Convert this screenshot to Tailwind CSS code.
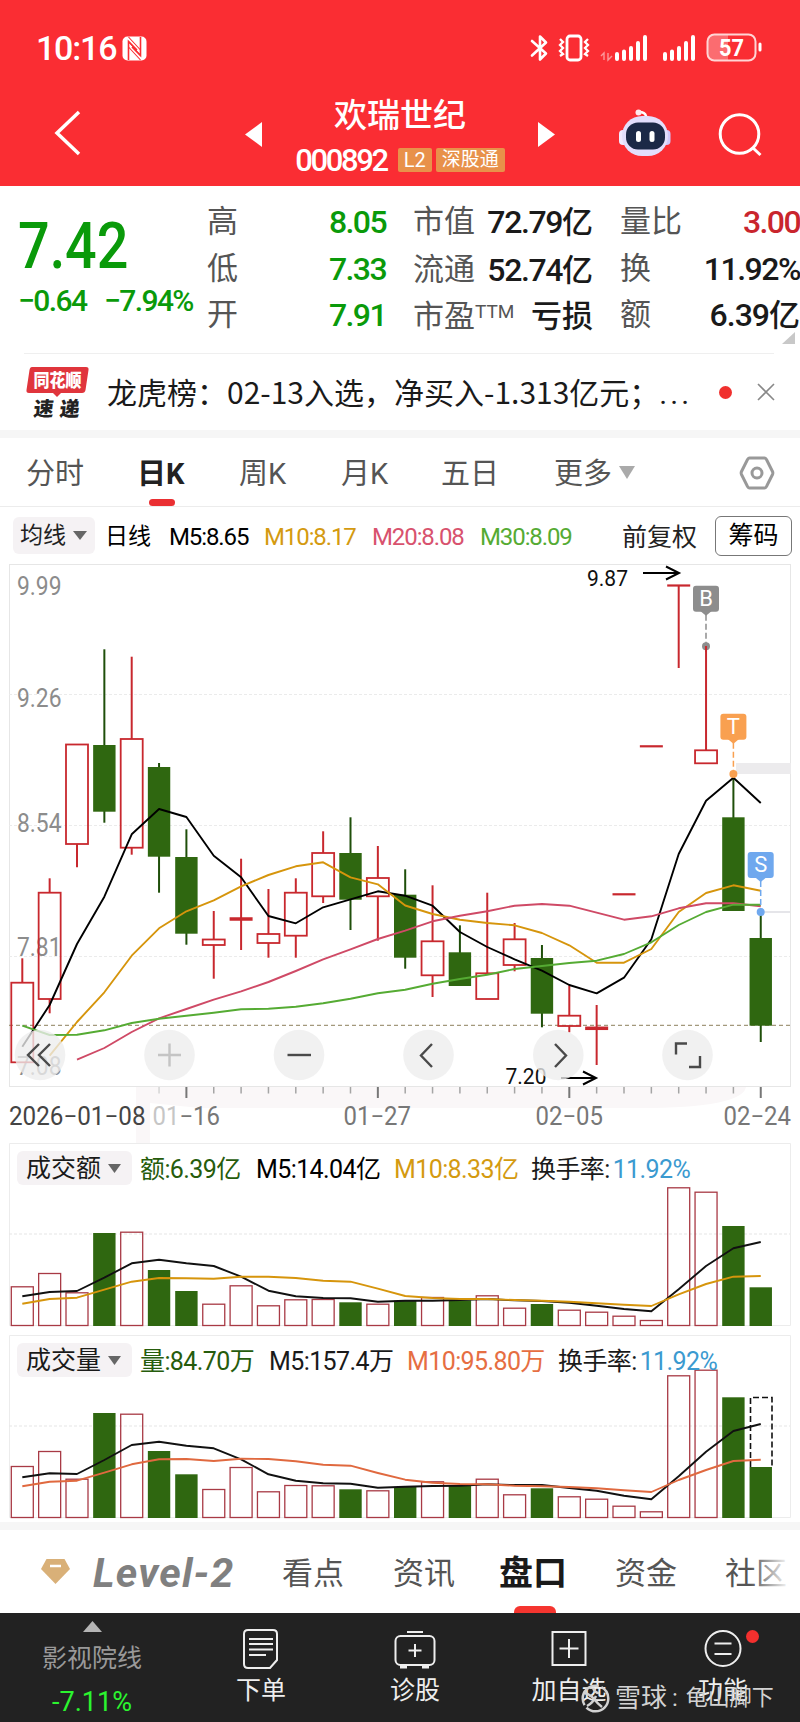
<!DOCTYPE html>
<html lang="zh-CN">

<head>
    <meta charset="UTF-8">
    <meta name="viewport" content="width=device-width, initial-scale=1.0">
    <title>欢瑞世纪 000892</title>
    <script src="https://cdn.jsdelivr.net/npm/@tailwindcss/browser@4"></script>
</head>

<body class="w-[800px] h-[1722px] overflow-hidden bg-white text-[#1a1a1a] whitespace-nowrap font-['Roboto','Noto_Sans_CJK_SC',sans-serif]">
    <!-- header start -->
    <header class="h-[186px] bg-[#fa2d33] text-white">
        <div class="h-[92px] pt-[4px] pl-[36px] pr-[38px] flex items-center">
            <span class="text-[34px] leading-10 font-medium tracking-[-1.2px]">10:16</span>
            <svg class="ml-[6px]" width="25" height="25" viewBox="0 0 25 25">
                <rect x=".5" y=".5" width="24" height="24" rx="5" fill="#fff" />
                <path d="M6.500 24V5.500L15 14M18.500 1v18.500L10 11" fill="none" stroke="#fa2d33" stroke-width="1.600" />
                <path d="M6.500 5.500l12 14M6.500 1l12 13M6.500 11l12 13" stroke="#fa2d33" stroke-width="1.100" />
            </svg>
            <!-- status icons -->
            <svg class="ml-auto" width="232" height="34" viewBox="530 31 232 34" fill="none" stroke="#fff">
                <path d="M532 41l14 12.500-6 6V36.500l6 6L532 55.500" stroke-width="2.600" stroke-linejoin="round" stroke-linecap="round" />
                <rect x="567" y="36" width="14" height="24" rx="3" stroke-width="2.800" />
                <path d="M560 39l3 3-3 3 3 3-3 3 3 3-3 2M588 39l-3 3 3 3-3 3 3 3-3 3 3 2" stroke-width="2.300" />
                <path d="M601 56l3-3v7M608 53v7l4-4" stroke-width="1.400" opacity=".5" />
                <path d="M617 54v5M624 51.500v7.500M631 48v11M638 43v16M645 37v22M665 54v5M672 51.500v7.500M679 48v11M686 43v16M693 37v22" stroke-width="4" stroke-linecap="round" />
                <path d="M728 35h-13q-7 0-7 7v11q0 7 7 7h13z" fill="#fff" fill-opacity=".3" stroke="none" />
                <rect x="707.500" y="34.500" width="48" height="26" rx="7" stroke-width="2" stroke="#ffd5d5" />
                <path d="M760 44v6" stroke-width="3" stroke-linecap="round" />
                <text x="719" y="56" font-size="24" font-weight="700" fill="#fff" stroke="none" textLength="25" lengthAdjust="spacingAndGlyphs">57</text>
            </svg>
        </div>
        <div class="h-[94px] flex">
            <svg class="ml-[54px] mt-[17px]" width="28" height="48" viewBox="54 109 28 48">
                <path d="M79 112L57 133l22 21" fill="none" stroke="#fff" stroke-width="3.500" />
            </svg>
            <svg class="ml-[163px] mt-[30px]" width="17" height="25" viewBox="0 0 17 25"><path d="M17 0v25L0 12.500z" fill="#fff" /></svg>
            <div class="w-[276px] flex flex-col items-center">
                <h1 class="text-[33px] leading-[40px] mt-[4px] font-medium">欢瑞世纪</h1>
                <div class="mt-[9px] flex items-center leading-[32px]">
                    <span class="text-[31px] font-medium tracking-[-2.4px]">000892</span>
                    <span class="ml-[11px] mt-[-2px] h-[24px] w-[34px] rounded-xs bg-[#e8914a] text-center text-[20px] leading-[25px]">L2</span>
                    <span class="ml-[4px] mt-[-2px] h-[24px] w-[69px] rounded-xs bg-[#e8914a] text-center text-[19px] leading-[24px]">深股通</span>
                </div>
            </div>
            <svg class="mt-[30px]" width="17" height="25" viewBox="0 0 17 25"><path d="M0 0v25l17-12.500z" fill="#fff" /></svg>
            <!-- assistant -->
            <svg class="ml-[63px] mt-[15px]" width="54" height="52" viewBox="618 107 54 52">
                <path d="M646 119v-3q-1-4-7-4" fill="none" stroke="#fff" stroke-width="2.500" />
                <circle cx="638.500" cy="112.500" r="3" fill="#ffe9ee" />
                <rect x="619" y="130" width="9" height="15" rx="4" fill="#f1eaff" />
                <rect x="662" y="130" width="8.500" height="15" rx="4" fill="#cfc8fb" />
                <rect x="622" y="116" width="46" height="40" rx="20" fill="#e3defc" />
                <rect x="626" y="122.500" width="39" height="27" rx="12" fill="#1c2947" />
                <rect x="636" y="131" width="5" height="11" rx="2.500" fill="#fff" />
                <rect x="649.500" y="131" width="5" height="11" rx="2.500" fill="#fff" />
            </svg>
            <svg class="ml-[46px] mt-[20px]" width="46" height="46" viewBox="718 112 46 46" fill="none" stroke="#fff" stroke-width="3">
                <circle cx="739.500" cy="134" r="19.300" />
                <path d="M752.500 147.500l8 7.500" />
            </svg>
        </div>
    </header>
    <!-- header end -->

    <!-- quote start -->
    <section class="relative h-[168px] flex pt-[13px]">
        <div class="w-[207px] pl-[18px] text-[#0a9a0a] font-medium">
            <div class="mt-[13px] h-[70px] text-[64px] leading-[70px] origin-left scale-x-[0.87]">7.42</div>
            <div class="mt-[1px] flex text-[30px] leading-[36px] tracking-[-1.6px]">
                <span class="w-[86px]">−0.64</span>
                <span>−7.94%</span>
            </div>
        </div>
        <div class="w-[179px] text-[31px] leading-[46.700px]">
            <div class="flex justify-between"><span class="text-[#555]">高</span><span class="font-medium tracking-[-1.600px] text-[#0a9a0a] text-[32px]">8.05</span></div>
            <div class="flex justify-between"><span class="text-[#555]">低</span><span class="font-medium tracking-[-1.600px] text-[#0a9a0a] text-[32px]">7.33</span></div>
            <div class="flex justify-between"><span class="text-[#555]">开</span><span class="font-medium tracking-[-1.600px] text-[#0a9a0a] text-[32px]">7.91</span></div>
        </div>
        <div class="ml-[27px] w-[180px] text-[31px] leading-[46.700px]">
            <div class="flex justify-between"><span class="text-[#555]">市值</span><span class="font-medium"><span class="tracking-[-1.400px] text-[32px]">72.79</span>亿</span></div>
            <div class="flex justify-between"><span class="text-[#555]">流通</span><span class="font-medium"><span class="tracking-[-1.400px] text-[32px]">52.74</span>亿</span></div>
            <div class="flex justify-between"><span class="flex text-[#555]">市盈<span class="text-[19px] leading-[36px]">TTM</span></span><span class="font-medium">亏损</span></div>
        </div>
        <div class="ml-[27px] w-[180px] text-[31px] leading-[46.700px]">
            <div class="flex justify-between"><span class="text-[#555]">量比</span><span class="font-medium tracking-[-1.600px] text-[32px] text-[#c9252d]">3.00</span></div>
            <div class="flex justify-between"><span class="text-[#555]">换</span><span class="font-medium tracking-[-1.500px] text-[32px]">11.92%</span></div>
            <div class="flex justify-between"><span class="text-[#555]">额</span><span class="font-medium"><span class="tracking-[-1px] text-[32px]">6.39</span>亿</span></div>
        </div>
        <svg class="absolute right-[5px] bottom-[10px]" width="13" height="12" viewBox="0 0 13 12"><path d="M13 0v12H0z" fill="#c8c8c8" /></svg>
        <div class="absolute bottom-0 left-[24px] right-[26px] h-px bg-[#efefef]"></div>
    </section>
    <!-- quote end -->

    <!-- news start -->
    <section class="h-[76px] flex items-center font-['Noto_Sans_CJK_SC',sans-serif]">
        <svg class="ml-[26px]" width="64" height="54" viewBox="26 364 64 54" font-weight="900">
            <path d="M32 366h54q3 0 2.500 3l-3 20q-.5 3-3.500 3H61l-4 4-4-4H29q-3 0-2.500-3l3-20q.5-3 2.500-3z" fill="#e0353c" />
            <text x="33.500" y="386" font-size="18" fill="#fff" textLength="48" lengthAdjust="spacingAndGlyphs">同花顺</text>
            <text transform="translate(33 415) skewX(-6)" font-size="20" fill="#222" textLength="46">速递</text>
        </svg>
        <span class="ml-[17px] w-[600px] text-[30px] leading-[40px]">龙虎榜：02-13入选，净买入-1.313亿元；<span class="font-['Roboto'] tracking-[3px]">...</span></span>
        <span class="ml-[12px] size-[13px] rounded-full bg-[#f0302e]"></span>
        <svg class="ml-[25px]" width="18" height="18" viewBox="0 0 18 18"><path d="M1 1l16 16M17 1L1 17" stroke="#888" stroke-width="1.600" /></svg>
    </section>
    <!-- news end -->
    <div class="h-[8px] bg-[#f6f6f6]"></div>

    <!-- period tabs -->
    <nav class="h-[69px] pl-[26px] flex border-b border-[#ececec] text-[29px] leading-[72px] text-[#555]">
        <span class="w-[111px]">分时</span>
        <span class="relative w-[102px] h-[68px] font-bold text-[#222]">日K
            <i class="absolute left-[12px] bottom-0 w-[26px] h-[7px] rounded-full bg-[#ea2f32]"></i>
        </span>
        <span class="w-[102px]">周K</span>
        <span class="w-[100px]">月K</span>
        <span class="w-[113px]">五日</span>
        <span>更多</span>
        <svg class="ml-[7px] mt-[28px]" width="16" height="13" viewBox="0 0 16 13"><path d="M0 0h16L8 13z" fill="#aaa" /></svg>
        <svg class="ml-auto mr-[25px] mt-[18px]" width="36" height="34" viewBox="0 0 36 34" fill="none" stroke="#999" stroke-width="3">
            <path d="M10.500 2h15q1 0 2 1.500l6 12q.7 1.500 0 3l-6 12q-1 1.500-2 1.500h-15q-1 0-2-1.500l-6-12q-.7-1.500 0-3l6-12q1-1.500 2-1.500z" />
            <circle cx="18" cy="17" r="5" />
        </svg>
    </nav>

    <!-- averages -->
    <div class="h-[57px] pl-[13px] pr-[8px] flex items-center text-[23px] leading-[36px] text-black">
        <div class="w-[82px] h-[37px] mr-[10px] rounded-md bg-[#f5f2f4] flex items-center pl-[7px] text-[#222]">均线
            <svg class="ml-[7px]" width="14" height="9" viewBox="0 0 14 9"><path d="M0 0h14L7 9z" fill="#666" /></svg>
        </div>
        <span class="w-[64px] mt-[2px]">日线</span>
        <span class="w-[95px] mt-[3px] text-[24px] tracking-[-1.100px]">M5:8.65</span>
        <span class="w-[108px] mt-[3px] text-[24px] tracking-[-1.100px] text-[#d49a10]">M10:8.17</span>
        <span class="w-[108px] mt-[3px] text-[24px] tracking-[-1.100px] text-[#d8526e]">M20:8.08</span>
        <span class="w-[108px] mt-[3px] text-[24px] tracking-[-1.100px] text-[#55ab33]">M30:8.09</span>
        <span class="ml-auto mt-[4px] text-[25px] text-[#222]">前复权</span>
        <span class="ml-[18px] w-[77px] h-[40px] rounded-md border border-[#777] text-center text-[25px] leading-[38px]">筹码</span>
    </div>

    <!-- k line chart -->
    <svg id="kline" class="block" width="800" height="579" viewBox="0 564 800 579"></svg>

    <!-- turnover -->
    <section class="relative h-[192px]">
        <svg id="amount" class="absolute inset-0" width="800" height="192" viewBox="0 0 800 192"></svg>
        <div class="relative h-[50px] pl-[17px] flex items-center text-[25px] leading-[34px] tracking-[-.6px]">
            <div class="w-[115px] h-[34px] mr-[8px] rounded-md bg-[#f5f2f4] flex items-center pl-[9px] tracking-normal"><span class="mt-[2px]">成交额</span>
                <svg class="ml-[7px]" width="13" height="9" viewBox="0 0 13 9"><path d="M0 0h13L6.500 9z" fill="#666" /></svg>
            </div>
            <span class="w-[116px] mt-[3px] text-[#265c0c]">额:6.39亿</span>
            <span class="w-[138px] mt-[3px] text-black">M5:14.04亿</span>
            <span class="w-[137px] mt-[3px] text-[#d49a10]">M10:8.33亿</span>
            <span class="mt-[3px]">换手率:</span><span class="ml-[3px] mt-[3px] text-[#3b9ad0]">11.92%</span>
        </div>
    </section>

    <!-- volume -->
    <section class="relative h-[187px]">
        <svg id="volume" class="absolute inset-0" width="800" height="187" viewBox="0 0 800 187"></svg>
        <div class="relative h-[50px] pl-[17px] flex items-center text-[25px] leading-[34px] tracking-[-.6px]">
            <div class="w-[115px] h-[34px] mr-[8px] rounded-md bg-[#f5f2f4] flex items-center pl-[9px] tracking-normal"><span class="mt-[2px]">成交量</span>
                <svg class="ml-[7px]" width="13" height="9" viewBox="0 0 13 9"><path d="M0 0h13L6.500 9z" fill="#666" /></svg>
            </div>
            <span class="w-[129px] mt-[3px] text-[#265c0c]">量:84.70万</span>
            <span class="w-[138px] mt-[3px]">M5:157.4万</span>
            <span class="w-[151px] mt-[3px] text-[#e66e42]">M10:95.80万</span>
            <span class="mt-[3px]">换手率:</span><span class="ml-[3px] mt-[3px] text-[#3b9ad0]">11.92%</span>
        </div>
    </section>
    <div class="h-[8px] bg-[#f6f6f6]"></div>

    <!-- info tabs -->
    <nav class="relative h-[83px] pl-[41px] flex items-center text-[31px] leading-[40px] text-[#555]">
        <svg width="29" height="25" viewBox="0 0 29 25">
            <path d="M5.500 0h18L29 10 14.500 25 0 10z" fill="#d9b078" />
            <path d="M9 7h11" stroke="#fff" stroke-width="2.500" />
        </svg>
        <span class="ml-[23px] mt-[2px] w-[189px] text-[41px] font-bold italic tracking-[1.2px] text-[#808080]">Level-2</span>
        <span class="w-[111px] mt-[4px]">看点</span>
        <span class="w-[106px] mt-[4px]">资讯</span>
        <span class="relative w-[116px] h-full leading-[86px] text-[34px] font-bold text-[#1a1a1a]">盘口
            <i class="absolute left-[15px] bottom-0 w-[42px] h-[7px] rounded-t-md bg-[#f5352f]"></i>
        </span>
        <span class="w-[110px] mt-[4px]">资金</span>
        <span class="mt-[4px]">社区</span>
        <div class="absolute right-0 top-0 w-[50px] h-[76px] bg-linear-to-r from-white/0 from-0% to-white to-80%"></div>
    </nav>

    <!-- bottom bar start -->
    <footer class="relative h-[109px] bg-[#222] text-[#eee] text-[25px] leading-[30px] flex">
        <div class="w-[184px] flex flex-col items-center">
            <svg class="mt-[8px]" width="19" height="11" viewBox="0 0 19 11"><path d="M0 11h19L9.500 0z" fill="#b5b5b5" /></svg>
            <span class="mt-[12px] text-[#999]">影视院线</span>
            <span class="mt-[13px] text-[27px] text-[#2bf52f]">-7.11%</span>
        </div>
        <div class="w-[154px] flex flex-col items-center pt-[15px]">
            <svg width="38" height="42" viewBox="0 0 38 42" fill="none" stroke="#eee" stroke-width="2">
                <path d="M6 2h25q4 0 4 4v26l-7 8H6q-4 0-4-4V6q0-4 4-4zM7 11h24M7 16h24M7 21.500h24M7 27h17" />
            </svg>
            <span class="mt-[6px]">下单</span>
        </div>
        <div class="w-[154px] flex flex-col items-center pt-[15px]">
            <svg width="42" height="42" viewBox="0 0 42 42" fill="none" stroke="#eee" stroke-width="2">
                <path d="M13 4h16" />
                <rect x="1.500" y="8" width="39" height="29" rx="5" />
                <path d="M21 16v13M14.500 22.500h13" />
                <path d="M6 39h7M28 39h7" stroke-width="3" />
            </svg>
            <span class="mt-[6px]">诊股</span>
        </div>
        <div class="w-[154px] flex flex-col items-center pt-[15px]">
            <svg width="38" height="42" viewBox="0 0 38 42" fill="none" stroke="#eee" stroke-width="2">
                <path d="M2.500 4h33v33h-33zM19 11v19M9.500 20.500h19" />
            </svg>
            <span class="mt-[6px]">加自选</span>
        </div>
        <div class="relative w-[154px] flex flex-col items-center pt-[15px]">
            <svg width="38" height="42" viewBox="0 0 38 42" fill="none" stroke="#eee" stroke-width="2">
                <circle cx="19" cy="20.500" r="17.500" />
                <path d="M10.500 15.500h17M10.500 26h17" />
            </svg>
            <i class="absolute left-[100px] top-[17px] size-[13px] rounded-full bg-[#f4302e]"></i>
            <span class="mt-[6px]">功能</span>
        </div>
        <!-- watermark -->
        <div class="absolute left-[581px] top-[69px] flex items-center text-[#d2d2d2] leading-[32px]">
            <svg width="29" height="29" viewBox="0 0 29 29" fill="none" stroke="#d2d2d2" stroke-width="2.500">
                <circle cx="14.500" cy="14.500" r="12.800" stroke-dasharray="30 3" />
                <path d="M3 9q6 1 10 6t8 8M6 22q6-3 9-10M12 4q2 5 6 5" />
            </svg>
            <span class="ml-[5px] text-[26px]">雪球</span>
            <span class="ml-[5px] text-[24px]">:</span>
            <span class="ml-[8px] text-[22px]">龟山脚下</span>
        </div>
    </footer>
    <!-- bottom bar end -->

    <script>
        const RED = '#c8282e'
        const GREEN = '#2f6710'
        const x = i => 22.3 + i * 27.35

        const line = (x1, y1, x2, y2, color, w = 1, dash = '') =>
            `<path d="M${x1} ${y1}L${x2} ${y2}" stroke="${color}" stroke-width="${w}" stroke-dasharray="${dash}" fill="none"/>`
        const curve = (ys, start, color) =>
            `<polyline points="${ys.map((y, i) => x(i + start) + ',' + y).join(' ')}" fill="none" stroke="${color}" stroke-width="1.9" stroke-linejoin="round"/>`
        const text = (str, left, y, w, color, size = 25, extra = '') =>
            `<text x="${left}" y="${y}" font-size="${size}" fill="${color}" textLength="${w}" lengthAdjust="spacingAndGlyphs" ${extra}>${str}</text>`

        // [up, body top, body bottom, high, low]
        const candles = [
            [1, 982.7, 1062.3, 958.3, 1062.3], [1, 892.7, 999, 878.3, 1013.3], [1, 744.5, 844, 744.5, 867.3],
            [0, 745, 811.7, 649.3, 822.7], [1, 739, 847.7, 656.7, 854.7], [0, 767, 856.7, 763, 892.7],
            [0, 857, 933.7, 829.3, 944.7], [1, 939.5, 945, 911, 978.7], [1, 919, 919, 858.7, 950],
            [1, 934, 943, 889, 957.7], [1, 892.7, 935.7, 878.3, 957.7], [1, 853, 896.3, 831.3, 903],
            [0, 853, 899.7, 817.3, 930], [1, 878, 896.3, 846, 940.7], [0, 894.7, 957.7, 869.3, 968.7],
            [1, 941.3, 975.3, 885.3, 997], [0, 952.3, 986, 925.3, 986], [1, 973.3, 999, 892.7, 999],
            [1, 939.3, 965, 923, 971.3], [0, 958, 1013.7, 945, 1027.3], [1, 1015.7, 1026, 985.3, 1032.3],
            [1, 1028.3, 1028.3, 1005, 1065], [1, 894.3, 894.3, 894.3, 894.3], [1, 746.3, 746.3, 746.3, 746.3],
            [1, 585.5, 585.5, 585.5, 668], [1, 750.3, 763.3, 646.3, 763.3], [0, 817.3, 911, 774, 911],
            [0, 938, 1025.7, 912, 1042]
        ]
        const ma5 = [1046.7, 1005, 944, 896.7, 834.3, 809, 817, 855.7, 877.3, 916, 923.3, 907.3, 899.3, 891.3, 895.7, 905.7, 932, 947, 959.3, 970.7, 985, 993.3, 977.7, 939.3, 854, 800.7, 777.7, 803]
        const ma10 = [1055.7, 1022, 992.3, 955.7, 928.3, 911.3, 900.3, 886.3, 875, 866.3, 862.3, 877.3, 884.3, 905.5, 914, 919.7, 923, 925.3, 933, 945.3, 962.7, 962.7, 949, 912, 893, 885.3, 890.7]
        const ma20 = [1059.7, 1048, 1032, 1018.3, 1009, 999.7, 991.3, 982, 971, 959.3, 949.3, 939, 930.7, 921.3, 915.7, 911.3, 905.7, 904, 905.7, 912.7, 919.7, 916.3, 908.3, 903.3, 903.3, 906.3]
        const ma30 = [1025.7, 1035, 1034.7, 1030.3, 1023, 1018.7, 1015.7, 1012.7, 1009.3, 1008.7, 1006.7, 1003.3, 998.7, 993.3, 989.7, 983.7, 979, 974.7, 969, 966, 963, 960.7, 954, 942.3, 925, 912, 904.7, 904.7]

        // k line
        let k = `<rect x="9.500" y="564.500" width="781" height="522" fill="none" stroke="#e6e6e6"/>`
        k += `<path d="M136 1087H746Q742 1108 640 1108H200L150 1103V1146H136z" fill="#faf7f8"/>`
        for (const y of [694.5, 825.5, 956.5]) k += line(9, y, 790, y, '#ebebeb', 1, '3 2')
        k += line(9, 1025.3, 791, 1025.3, '#a3997c', 1.3, '4 3')
        k += `<rect x="736" y="763" width="55" height="11" fill="#ecebed"/>`
        k += line(762, 912, 790, 912, '#dcdce2', 1.5)
        const prices = [['9.99', 594.7], ['9.26', 707], ['8.54', 832], ['7.81', 956], ['7.08', 1074.7]]
        for (const [p, y] of prices) k += text(p, 17, y, 44.5, '#8c8c8c')
        candles.forEach(([up, top, bottom, high, low], i) => {
            const c = x(i)
            if (!up) {
                k += line(c, high, c, low, '#1f4f0a', 2)
                k += `<rect x="${c - 11.2}" y="${top}" width="22.400" height="${bottom - top}" fill="${GREEN}"/>`
            } else if (top == bottom) {
                k += line(c - 11.5, top, c + 11.5, top, RED, high == top ? 2.2 : 3.5)
                k += line(c, high, c, low, RED, 2)
            } else {
                k += line(c, high, c, top, RED, 2) + line(c, bottom, c, low, RED, 2)
                k += `<rect x="${c - 11}" y="${top}" width="22" height="${bottom - top}" fill="none" stroke="${RED}" stroke-width="1.8"/>`
            }
        })
        k += curve(ma5, 0, '#000') + curve(ma10, 1, '#d6950c') + curve(ma20, 2, '#cf4a66') + curve(ma30, 0, '#55ab33')

        // trade marks
        const mark = (letter, cx, y, end, color) =>
            `<rect x="${cx - 13}" y="${y}" width="26" height="26" rx="3" fill="${color}"/>
            <path d="M${cx - 6} ${y + 25}h12l-6 5z" fill="${color}"/>
            <text x="${cx}" y="${y + 20}" font-size="22" fill="#fff" text-anchor="middle">${letter}</text>`
            + line(cx, y + 29, cx, end, color, 1.5, '6 3')
            + `<circle cx="${cx}" cy="${end}" r="4" fill="${color}"/>`
        k += mark('B', 706, 585.7, 646.3, '#8d8d8d') + line(706, 646, 706, 652, RED, 2)
        k += mark('T', 733.4, 713.7, 774, '#f9a050')
        k += mark('S', 760.7, 852, 912, '#6fa8ee')

        // high / low labels
        const arrow = (x1, x2, y) => `<path d="M${x1} ${y}H${x2}M${x2 - 13} ${y - 6.5}L${x2} ${y}L${x2 - 13} ${y + 6.5}" fill="none" stroke="#000" stroke-width="2"/>`
        k += text('9.87', 587, 585.7, 41, '#111', 22) + arrow(643, 679, 573)
        k += text('7.20', 505.5, 1084, 41, '#111', 22) + arrow(561, 596, 1078)

        // round buttons
        const icons = [
            'M39 1044L28 1055l11 11M50 1044L39 1055l11 11', 'M158 1055h23M169.500 1043.500v23', 'M287.500 1055h23.500',
            'M432 1044L421 1055.500l11 11.500', 'M555 1044L566 1055.500l-11 11.500', 'M687 1043.500h-11v11M689 1067h11v-11'
        ]
        const centers = [40, 169.5, 299, 428.5, 558.3, 687.5]
        icons.forEach((d, i) => {
            k += `<circle cx="${centers[i]}" cy="1055" r="25.300" fill="#ededed" fill-opacity=".78"/>`
            k += `<path d="${d}" fill="none" stroke="${i == 1 ? '#c4c4c4' : '#4a4a4a'}" stroke-width="2.4"/>`
        })

        // date axis
        for (let i = 5; i < 28; i++) {
            const major = i % 7 == 6
            k += line(x(i), 1087, x(i), major ? 1098 : 1093.5, i == 5 ? '#d5d5d5' : major ? '#777' : '#a5a5a5', major ? 2 : 1.5)
        }
        k += text('2026−01−08', 9, 1125, 136.5, '#444')
        k += text('<tspan fill="#c6c6c6">01</tspan>−16', 152.5, 1125, 67.5, '#777')
        k += text('01−27', 343.5, 1125, 67.5, '#777') + text('02−05', 535.5, 1125, 67.5, '#777') + text('02−24', 723.5, 1125, 67.5, '#777')
        document.getElementById('kline').innerHTML = k

        // turnover and volume bars
        const falls = [3, 5, 6, 12, 14, 16, 19, 26, 27]
        function bars(id, tops, avg5, avg10, color) {
            let s = `<path d="M9.500 182.500V.5h781v182z" fill="none" stroke="#ececec"/>` + line(9, 91, 790, 91, '#e6e6e6', 1.2, '3 2')
            tops.forEach((y, i) => {
                s += falls.includes(i)
                    ? `<rect x="${x(i) - 11.2}" y="${y}" width="22.400" height="${183 - y}" fill="${GREEN}"/>`
                    : `<rect x="${x(i) - 11}" y="${y + .5}" width="22" height="${182 - y}" fill="none" stroke="#a83a45" stroke-width="1.300"/>`
            })
            // projected volume for today
            if (id == 'volume') s += `<path d="M750.500 132V62.500h21.500V132" fill="none" stroke="#111" stroke-width="1.600" stroke-dasharray="6 3"/>`
            s += curve(avg5, 0, '#111') + curve(avg10, 0, color)
            document.getElementById(id).innerHTML = s
        }
        bars('amount',
            [143.3, 130, 149.3, 90, 88.7, 127, 148, 160.7, 142.3, 162.3, 156.3, 156, 159.3, 160.7, 157.7, 154, 157.3, 152.3, 164.7, 161, 166.7, 168.7, 172.7, 177, 44.3, 48.7, 83, 144.3],
            [153.3, 149, 148, 134.7, 120.3, 116.7, 120.3, 123, 133.7, 147.7, 153.3, 155, 155.3, 158.7, 157.7, 157.7, 157, 156, 157.3, 158, 159.7, 162.7, 166, 168.3, 146.3, 123, 105.3, 99],
            [160.7, 156, 154.7, 146.7, 138.7, 135, 135.3, 135.7, 133.7, 133.7, 135, 137.7, 138.7, 145.7, 153, 155, 156, 156, 157, 157.7, 158.7, 160.3, 161.7, 163, 151.3, 141, 133.7, 133],
            '#d6950c')
        bars('volume',
            [131, 116, 143.7, 78, 78.7, 116, 139.3, 154, 132, 156.3, 150, 150.3, 154.3, 155.3, 152, 146.3, 150.7, 143.7, 159.3, 153.3, 161.3, 163.7, 170.7, 176.3, 40.3, 34.7, 62.3, 132],
            [142.3, 138.3, 139, 125, 110, 106.7, 110.7, 113.3, 124.3, 139.3, 145.7, 148.3, 148.7, 152.7, 151.7, 151, 150.7, 149.3, 150, 150, 153, 155.7, 160.7, 164.3, 141.3, 116.7, 96, 89],
            [151.3, 146.7, 145.7, 137.7, 129.3, 124.3, 124, 126, 123.7, 124, 126.3, 129.7, 130.7, 138, 144.7, 147.7, 149, 149.3, 150.7, 151.3, 152, 153.3, 155.3, 157, 145, 135, 126, 124.7],
            '#e0693f')
    </script>
</body>

</html>
